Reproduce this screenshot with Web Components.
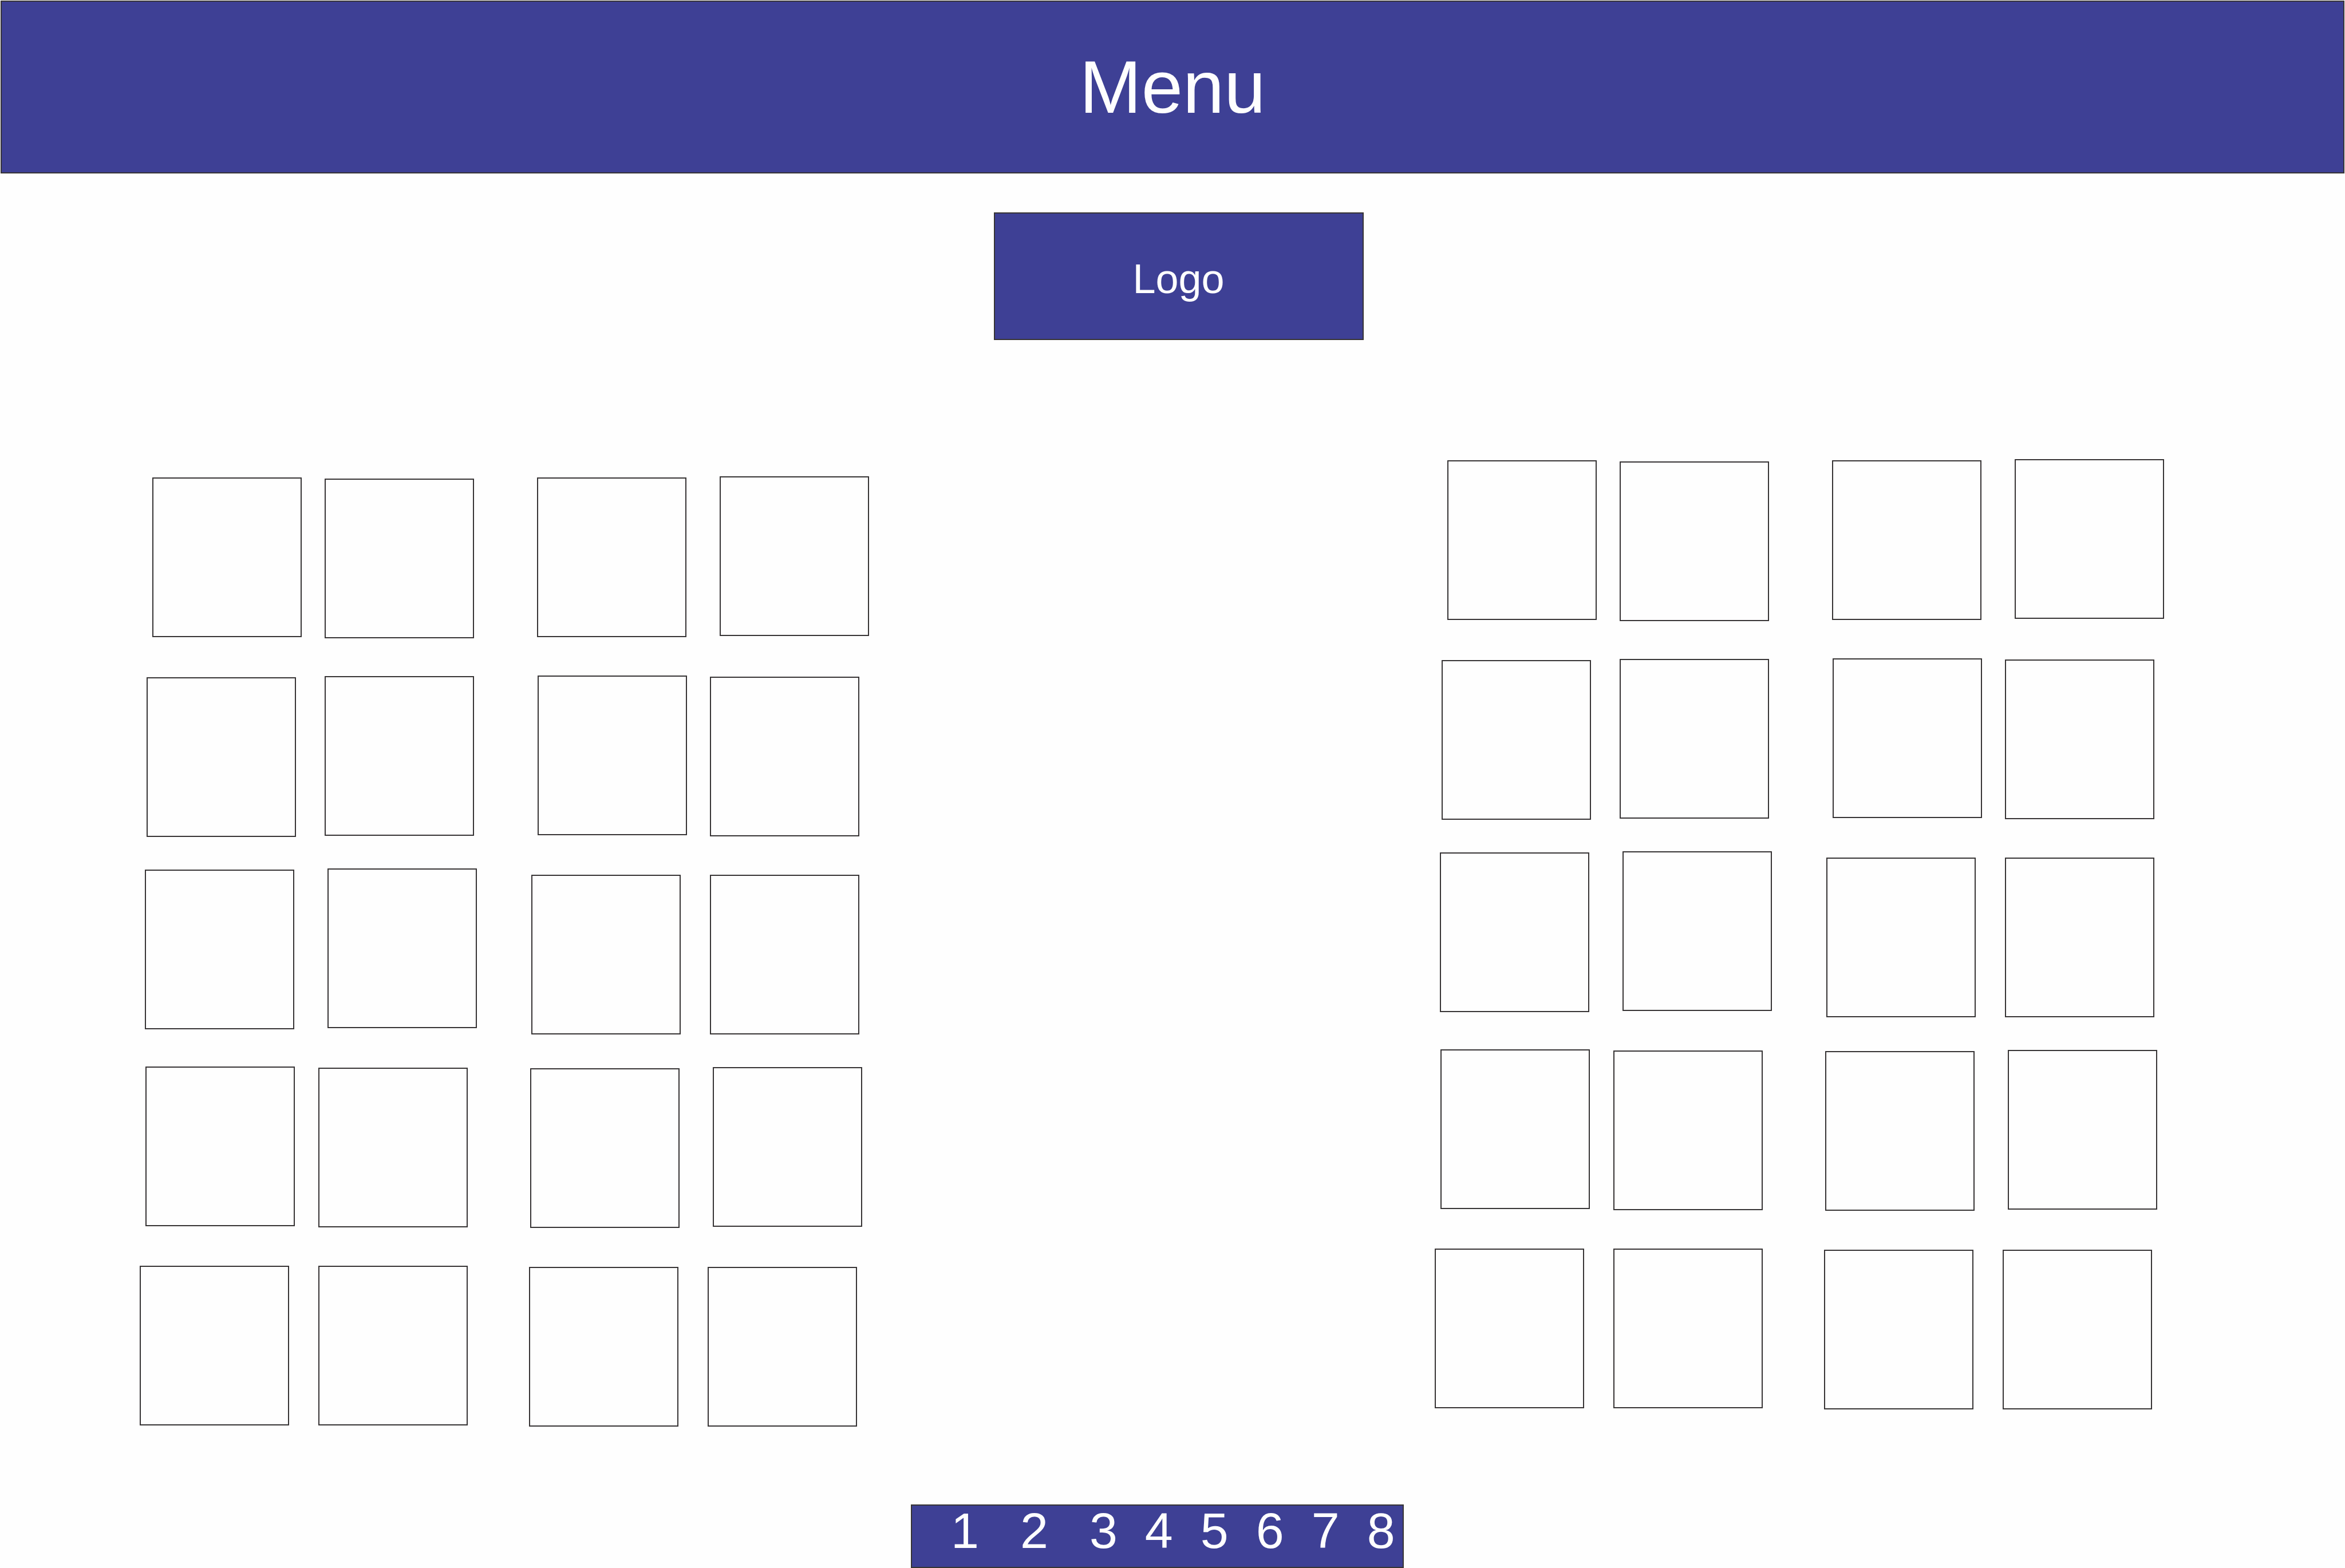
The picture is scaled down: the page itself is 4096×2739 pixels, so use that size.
<!DOCTYPE html>
<html lang="en">
<head>
<meta charset="utf-8">
<title>Menu</title>
<style>
  html { --fill: #3e4095; --line: #373435; --paper: #fefefe; }
  body { margin: 0; background: var(--paper); color: var(--paper); font-family: "Liberation Sans", Arial, sans-serif; }
</style>
</head>
<body>
<wire-page>
  <menu-bar slot="header">Menu</menu-bar>
  <logo-box slot="logo">Logo</logo-box>
  <tile-board class="left"></tile-board>
  <tile-board class="right"></tile-board>
  <page-links slot="footer" count="8"></page-links>
</wire-page>

<script>
class BaseElement extends HTMLElement {
  render(html) {
    this.attachShadow({ mode: "open" }).innerHTML = html;
  }
}

customElements.define("wire-page", class extends BaseElement {
  constructor() {
    super();
    this.render(`
      <style>
        :host { display: flex; flex-direction: column; min-height: 100vh; box-sizing: border-box; }
        .logo { display: flex; justify-content: center; padding: 68px 0 0 21px; }
        main { display: flex; justify-content: space-between; align-items: flex-start; padding: 208px 316px 0 244px; }
        footer { display: flex; justify-content: center; margin-top: auto; padding-right: 53px; }
        ::slotted(.left) { margin-top: 30px; }
      </style>
      <header><slot name="header"></slot></header>
      <div class="logo"><slot name="logo"></slot></div>
      <main><slot></slot></main>
      <footer><slot name="footer"></slot></footer>`);
  }
});

customElements.define("menu-bar", class extends BaseElement {
  constructor() {
    super();
    this.render(`
      <style>
        :host { display: block; padding: 1px 1px 0; }
        .bar { display: flex; justify-content: center; padding: 75px 0; background: var(--fill); border: 2px solid var(--line); }
        h1 { margin: 0; font-size: 130px; line-height: 148px; font-weight: 400; }
      </style>
      <div class="bar"><h1><slot></slot></h1></div>`);
  }
});

customElements.define("logo-box", class extends BaseElement {
  constructor() {
    super();
    this.render(`
      <style>
        :host { display: block; box-sizing: border-box; width: 646px; padding: 74px 0 65px; text-align: center;
                font-size: 72px; line-height: 80px; background: var(--fill); border: 2px solid var(--line); }
      </style>
      <slot></slot>`);
  }
});

customElements.define("wire-tile", class extends BaseElement {
  constructor() {
    super();
    this.render(`
      <style>
        :host { display: block; box-sizing: border-box; width: 261px; height: 279px; border: 2px solid var(--line); }
      </style>`);
  }
});

// Each pair: space above, indent, gap between its tiles, and which tile hangs low.
const STACKS = [
  [[2, 22, 40, "second"], [66, 12, 50, "first"], [55, 9, 58, "first"], [65, 10, 41, "second"], [67, 0, 51, ""]],
  [[0, 14, 58, "first"], [67, 15, 40, "second"], [67, 4, 51, ""], [55, 2, 58, "first"], [68, 0, 51, ""]],
];

customElements.define("tile-board", class extends BaseElement {
  constructor() {
    super();
    const pair = ([space, indent, gap, low]) =>
      `<div class="pair ${low}" style="margin-top:${space}px;padding-left:${indent}px;gap:${gap}px"><wire-tile></wire-tile><wire-tile></wire-tile></div>`;
    this.render(`
      <style>
        :host { display: flex; gap: 91px; align-items: flex-start; }
        .stack { display: flex; flex-direction: column; width: 589px; }
        .stack:last-child { width: 594px; }
        .pair { display: flex; align-items: flex-start; height: 281px; }
        .first > :first-child, .second > :last-child { align-self: flex-end; }
      </style>
      ${STACKS.map(s => `<div class="stack">${s.map(pair).join("")}</div>`).join("")}`);
  }
});

customElements.define("page-links", class extends BaseElement {
  connectedCallback() {
    const count = Number(this.getAttribute("count"));
    const links = Array.from({ length: count }, (_, i) => `<a href="#page-${i + 1}">${i + 1}</a>`).join("");
    this.render(`
      <style>
        :host { display: block; }
        nav { display: flex; gap: 48px; box-sizing: border-box; width: 861px; padding: 0 0 19px 68px;
              background: var(--fill); border: 2px solid var(--line); }
        a { color: inherit; text-decoration: none; font-size: 88px; line-height: 88px; }
        a:nth-child(-n+2) { margin-right: 24px; }
      </style>
      <nav aria-label="Pages">${links}</nav>`);
  }
});
</script>
</body>
</html>
